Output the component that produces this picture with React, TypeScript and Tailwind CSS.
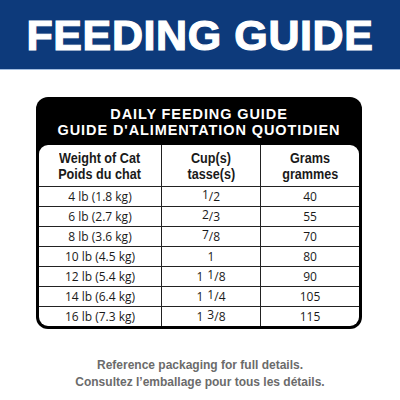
import * as React from 'react'

const rows: { weight: string; whole?: string; num?: string; den?: string; grams: string }[] = [
  { weight: '4 lb (1.8 kg)', num: '1', den: '2', grams: '40' },
  { weight: '6 lb (2.7 kg)', num: '2', den: '3', grams: '55' },
  { weight: '8 lb (3.6 kg)', num: '7', den: '8', grams: '70' },
  { weight: '10 lb (4.5 kg)', whole: '1', grams: '80' },
  { weight: '12 lb (5.4 kg)', whole: '1', num: '1', den: '8', grams: '90' },
  { weight: '14 lb (6.4 kg)', whole: '1', num: '1', den: '4', grams: '105' },
  { weight: '16 lb (7.3 kg)', whole: '1', num: '3', den: '8', grams: '115' },
]

const gotham = "font-['Liberation_Sans',Arial,sans-serif]"
const myriad = "font-['Open_Sans','Noto_Sans',sans-serif]"

function Cups({ whole, num, den }: { whole?: string; num?: string; den?: string }) {
  return (
    <span className="inline-flex items-start">
      {whole && <span>{whole}</span>}
      {whole && num && <span className="w-[4px]" />}
      {num && (
        <>
          <span className="text-[12px] leading-none -mt-[2px]">{num}</span>
          <span>/{den}</span>
        </>
      )}
    </span>
  )
}

function HeadCell({ top, bottom, divider }: { top: string; bottom: string; divider?: boolean }) {
  return (
    <div
      className={`flex flex-col items-center justify-center ${divider ? 'border-l-[1.5px] border-[#222]' : ''}`}
    >
      <span className="inline-block scale-x-[0.87] whitespace-nowrap">{top}</span>
      <span className="inline-block scale-x-[0.87] whitespace-nowrap">{bottom}</span>
    </div>
  )
}

export default function App() {
  return (
    <div className="w-[400px] h-[400px] bg-white overflow-hidden">
      {/* Blue banner */}
      <div className="h-[70px] bg-[#0d3a7b] border-b border-[#a3bde0] flex items-center justify-center">
        <h1
          className={`${gotham} text-white font-bold text-[43px] leading-none tracking-[0.6px] [-webkit-text-stroke:1.2px_white] mt-[2px]`}
        >
          FEEDING GUIDE
        </h1>
      </div>

      {/* Table */}
      <div className="mt-[27px] mx-[36px] w-[326px] rounded-[12px] bg-black px-[3px] pb-[3px]">
        <div
          className={`${gotham} h-[48px] flex flex-col items-center justify-center text-white font-bold text-[14.5px] leading-[16px] tracking-[0.9px] pt-[2px]`}
        >
          <span>DAILY FEEDING GUIDE</span>
          <span>GUIDE D'ALIMENTATION QUOTIDIEN</span>
        </div>
        <div className="bg-white rounded-t-[9px] rounded-b-[9px] overflow-hidden text-[#1a1a1a]">
          <div className={`${gotham} grid grid-cols-[122px_99px_1fr] h-[41px] font-bold text-[14.5px] leading-[16px]`}>
            <HeadCell top="Weight of Cat" bottom="Poids du chat" />
            <HeadCell top="Cup(s)" bottom="tasse(s)" divider />
            <HeadCell top="Grams" bottom="grammes" divider />
          </div>
          {rows.map((r) => (
            <div
              key={r.weight}
              className={`${myriad} grid grid-cols-[122px_99px_1fr] h-[20px] border-t-[1.5px] border-[#222] text-[12px] leading-none`}
            >
              <div className="flex items-center justify-center pt-[1px]">{r.weight}</div>
              <div className="flex items-center justify-center pt-[1px] border-l-[1.5px] border-[#222]">
                <Cups whole={r.whole} num={r.num} den={r.den} />
              </div>
              <div className="flex items-center justify-center pt-[1px] border-l-[1.5px] border-[#222]">{r.grams}</div>
            </div>
          ))}
        </div>
      </div>

      {/* Footnote */}
      <div className={`${gotham} mt-[28px] flex flex-col items-center text-[#6b6b6b] font-bold text-[12px] leading-[17px]`}>
        <span>Reference packaging for full details.</span>
        <span>Consultez l’emballage pour tous les détails.</span>
      </div>
    </div>
  )
}
